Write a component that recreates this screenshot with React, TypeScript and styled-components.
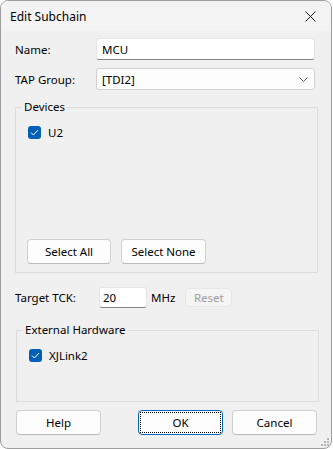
import styled, { createGlobalStyle } from "styled-components";

const GlobalStyle = createGlobalStyle`
  html, body {
    margin: 0;
    padding: 0;
    background: #ffffff;
  }
  * {
    box-sizing: border-box;
  }
`;

const Window = styled.div`
  position: relative;
  width: 332px;
  height: 449px;
  border: 1px solid #9e9e9e;
  border-radius: 8px;
  overflow: hidden;
  background: #f0f0f0;
  font-family: "Segoe UI", "Noto Sans", sans-serif;
  font-size: 11.5px;
  color: #000;
  display: flex;
  flex-direction: column;
`;

const TitleBar = styled.div`
  height: 30px;
  flex: none;
  display: flex;
  align-items: center;
  justify-content: space-between;
  padding: 0 9px 0 9px;
  background: #f3f3f3;
`;

const Title = styled.span`
  font-size: 12px;
`;

const CloseButton = styled.div`
  width: 24px;
  height: 24px;
  display: flex;
  align-items: center;
  justify-content: center;
  margin-top: 1px;
`;

const Body = styled.div`
  flex: 1;
  display: flex;
  flex-direction: column;
  padding: 7px 14px 0 14px;
`;

const FormRow = styled.div<{ $gap?: number }>`
  display: grid;
  grid-template-columns: 81px 219px;
  align-items: center;
  height: 22px;
  margin-top: ${({ $gap }) => $gap ?? 0}px;
`;

const Label = styled.span`
  white-space: nowrap;
`;

const TextInput = styled.div`
  height: 22px;
  background: #ffffff;
  border: 1px solid #e5e5e5;
  border-bottom: 1px solid #868686;
  border-radius: 3px;
  display: flex;
  align-items: center;
  padding: 0 5px;
`;

const Combo = styled.div`
  height: 22px;
  background: #fdfdfd;
  border: 1px solid #d0d0d0;
  border-radius: 3px;
  display: flex;
  align-items: center;
  justify-content: space-between;
  padding: 0 6px 0 5px;
`;

const Group = styled.div<{ $height: number; $offset?: number; $top: number }>`
  position: relative;
  width: 303px;
  height: ${({ $height }) => $height}px;
  margin-top: ${({ $top }) => $top}px;
  margin-left: ${({ $offset }) => $offset ?? 0}px;
  border: 1px solid #dcdcdc;
  display: flex;
  flex-direction: column;
  padding: 17px 11px 8px 11px;
`;

const Legend = styled.span`
  position: absolute;
  top: -9px;
  left: 6px;
  padding: 0 2px;
  background: #f0f0f0;
  line-height: 16px;
`;

const CheckRow = styled.label`
  display: flex;
  align-items: center;
  gap: 7px;
  height: 15px;
  padding-left: 1px;
`;

const CheckBox = styled.span`
  width: 13px;
  height: 13px;
  border-radius: 3px;
  background: #005fb8;
  display: flex;
  align-items: center;
  justify-content: center;
`;

const ButtonRow = styled.div`
  display: flex;
  gap: 10px;
  margin-top: auto;
`;

const Button = styled.div<{ $width?: number; $focused?: boolean }>`
  position: relative;
  width: ${({ $width }) => $width ?? 85}px;
  height: 25px;
  background: #fdfdfd;
  border: 1px solid ${({ $focused }) => ($focused ? "#0067c0" : "#d0d0d0")};
  border-bottom-color: ${({ $focused }) => ($focused ? "#0067c0" : "#bababa")};
  border-radius: 4px;
  display: flex;
  align-items: center;
  justify-content: center;
  &::after {
    content: "";
    display: ${({ $focused }) => ($focused ? "block" : "none")};
    position: absolute;
    inset: 1px;
    border: 1px dotted #000;
  }
`;

const DisabledButton = styled.div`
  width: 47px;
  height: 19px;
  background: #f5f5f5;
  border: 1px solid #e6e6e6;
  border-radius: 4px;
  color: #9d9d9d;
  display: flex;
  align-items: center;
  justify-content: center;
  margin-left: 10px;
`;

const TckRow = styled.div`
  display: flex;
  align-items: center;
  height: 21px;
  margin-top: 14px;
`;

const TckLabel = styled.span`
  width: 84px;
`;

const SmallInput = styled(TextInput)`
  width: 48px;
  height: 21px;
  padding: 0 3px;
`;

const Unit = styled.span`
  margin-left: 4px;
`;

const Footer = styled.div`
  display: flex;
  gap: 9px;
  margin-top: 8px;
  padding-left: 1px;
`;

const Spacer = styled.div`
  flex: 1;
`;

const Grip = styled.svg`
  position: absolute;
  right: 2px;
  bottom: 2px;
`;

const Check = () => (
  <svg width="9" height="7" viewBox="0 0 9 7">
    <path d="M1 3.6 L3.4 6 L8 1" fill="none" stroke="#ffffff" strokeWidth="1" />
  </svg>
);

export default function App() {
  return (
    <>
      <GlobalStyle />
      <Window>
        <TitleBar>
          <Title>Edit Subchain</Title>
          <CloseButton>
            <svg width="11" height="11" viewBox="0 0 11 11">
              <path d="M0.5 0.5 L10.5 10.5 M10.5 0.5 L0.5 10.5" stroke="#1a1a1a" strokeWidth="1" />
            </svg>
          </CloseButton>
        </TitleBar>
        <Body>
          <FormRow>
            <Label>Name:</Label>
            <TextInput>MCU</TextInput>
          </FormRow>
          <FormRow $gap={8}>
            <Label>TAP Group:</Label>
            <Combo>
              <span>[TDI2]</span>
              <svg width="9" height="5" viewBox="0 0 9 5">
                <path d="M0.5 0.5 L4.5 4.5 L8.5 0.5" fill="none" stroke="#5c5c5c" strokeWidth="1" />
              </svg>
            </Combo>
          </FormRow>

          <Group $height={166} $top={17}>
            <Legend>Devices</Legend>
            <CheckRow>
              <CheckBox>
                <Check />
              </CheckBox>
              U2
            </CheckRow>
            <ButtonRow>
              <Button $width={84}>Select All</Button>
              <Button $width={85}>Select None</Button>
            </ButtonRow>
          </Group>

          <TckRow>
            <TckLabel>Target TCK:</TckLabel>
            <SmallInput>20</SmallInput>
            <Unit>MHz</Unit>
            <DisabledButton>Reset</DisabledButton>
          </TckRow>

          <Group $height={72} $top={22} $offset={1}>
            <Legend>External Hardware</Legend>
            <CheckRow>
              <CheckBox>
                <Check />
              </CheckBox>
              XJLink2
            </CheckRow>
          </Group>

          <Footer>
            <Button>Help</Button>
            <Spacer />
            <Button $focused>OK</Button>
            <Button>Cancel</Button>
          </Footer>
        </Body>
        <Grip width="9" height="9" viewBox="0 0 9 9">
          <g fill="#b5b5b5">
            <rect x="7" y="1" width="2" height="2" />
            <rect x="4" y="4" width="2" height="2" />
            <rect x="7" y="4" width="2" height="2" />
            <rect x="1" y="7" width="2" height="2" />
            <rect x="4" y="7" width="2" height="2" />
            <rect x="7" y="7" width="2" height="2" />
          </g>
        </Grip>
      </Window>
    </>
  );
}
